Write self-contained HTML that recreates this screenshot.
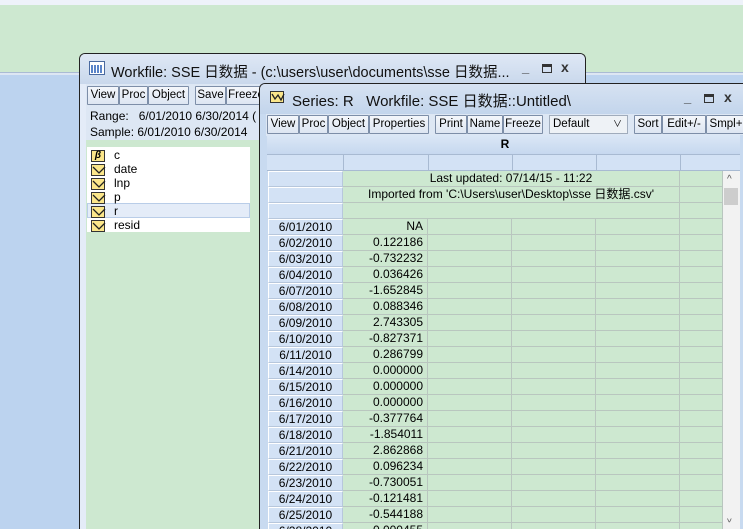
<!DOCTYPE html>
<html><head><meta charset="utf-8"><style>
*{margin:0;padding:0;box-sizing:border-box}
html,body{width:743px;height:529px;overflow:hidden}
body{position:relative;background:#bcd3ef;font-family:"Liberation Sans","Noto Sans CJK SC",sans-serif;font-size:12px;color:#000}
.a{position:absolute}
.btn{position:absolute;height:19px;border:1px solid #7d8ea8;background:linear-gradient(#f4f7fb,#dde6f2);font-size:11.5px;line-height:17px;text-align:center;border-radius:1px}
.ico{position:absolute;width:14px;height:12px;border:1px solid #333;background:#fbe68a}
.ico svg{position:absolute;left:0;top:0}
.row{position:absolute;left:268px;height:16px;width:455px}
.obs{position:absolute;left:0;width:75px;height:16px;background:#d3e2f5;border:1px solid #fff;border-right-color:#b7c7dc;border-bottom-color:#b7c7dc;text-align:center;line-height:14px}
.cell{position:absolute;height:16px;border-right:1px solid #b9c6bf;border-bottom:1px solid #b9c6bf;background:#cde8d0;line-height:15px}
.v{left:75px;width:85px;text-align:right;padding-right:4px}
.c2{left:160px;width:84px}.c3{left:244px;width:84px}.c4{left:328px;width:84px}.c5{left:412px;width:43px}
</style></head><body>
<div class="a" style="left:0;top:0;width:743px;height:5px;background:#eef2fa"></div>
<div class="a" style="left:0;top:5px;width:743px;height:67px;background:#cde8d0"></div>
<div class="a" style="left:0;top:72px;width:743px;height:3px;background:#dde6f3;border-top:1px solid #aabbd4"></div>

<!-- Workfile window -->
<div class="a" style="left:79px;top:53px;width:507px;height:476px;background:#e4ecf8;border:1px solid #222;border-bottom:none;border-radius:6px 6px 0 0"></div>
<div class="a" style="left:80px;top:54px;width:505px;height:30px;background:linear-gradient(#dfe8f5,#c9d8ec);border-radius:5px 5px 0 0"></div>
<div class="a" style="left:89px;top:61px;width:16px;height:14px;border:1px solid #4a6aa0;background:#fff"><div style="position:absolute;left:1px;top:3px;width:12px;height:8px;background:repeating-linear-gradient(90deg,#5a84c8 0 2px,#fff 2px 3px)"></div></div>
<div class="a" style="left:111px;top:61px;font-size:14.5px;color:#111;white-space:nowrap">Workfile: SSE 日数据 - (c:\users\user\documents\sse 日数据...</div>
<div class="a" style="left:522px;top:60px;font-size:13px;font-weight:bold;color:#333">_</div>
<div class="a" style="left:542px;top:64px;width:10px;height:9px;border:1px solid #333;border-top-width:3px"></div>
<div class="a" style="left:561px;top:59px;font-size:14px;font-weight:bold;color:#333">x</div>
<div class="a" style="left:86px;top:84px;width:499px;height:445px;background:#cde8d0"></div>
<div class="a" style="left:86px;top:84px;width:499px;height:56px;background:#dde7f4"></div>
<div class="btn" style="left:87px;top:86px;width:32px">View</div>
<div class="btn" style="left:119px;top:86px;width:29px">Proc</div>
<div class="btn" style="left:148px;top:86px;width:41px">Object</div>
<div class="btn" style="left:195px;top:86px;width:31px">Save</div>
<div class="btn" style="left:226px;top:86px;width:40px">Freeze</div>
<div class="a" style="left:90px;top:109px">Range:&nbsp;&nbsp; 6/01/2010 6/30/2014 (</div>
<div class="a" style="left:90px;top:125px">Sample: 6/01/2010 6/30/2014</div>
<div class="a" style="left:87px;top:147px;width:163px;height:85px;background:#fff"></div>
<div class="a" style="left:87px;top:203px;width:163px;height:15px;background:#e4ecf8;border:1px solid #b9cde8"></div>
<div class="ico" style="left:91px;top:150px;font-size:10px;font-style:italic;font-weight:bold;text-align:center;line-height:10px">β</div>
<div class="a" style="left:114px;top:148px">c</div>
<div class="ico" style="left:91px;top:164px"><svg width="14" height="12"><path d="M1 2L7 8L13 2" stroke="#222" fill="none" stroke-width="1.3"/></svg></div>
<div class="a" style="left:114px;top:162px">date</div>
<div class="ico" style="left:91px;top:178px"><svg width="14" height="12"><path d="M1 2L7 8L13 2" stroke="#222" fill="none" stroke-width="1.3"/></svg></div>
<div class="a" style="left:114px;top:176px">lnp</div>
<div class="ico" style="left:91px;top:192px"><svg width="14" height="12"><path d="M1 2L7 8L13 2" stroke="#222" fill="none" stroke-width="1.3"/></svg></div>
<div class="a" style="left:114px;top:190px">p</div>
<div class="ico" style="left:91px;top:206px"><svg width="14" height="12"><path d="M1 2L7 8L13 2" stroke="#222" fill="none" stroke-width="1.3"/></svg></div>
<div class="a" style="left:114px;top:204px">r</div>
<div class="ico" style="left:91px;top:220px"><svg width="14" height="12"><path d="M1 2L7 8L13 2" stroke="#222" fill="none" stroke-width="1.3"/></svg></div>
<div class="a" style="left:114px;top:218px">resid</div>

<!-- Series window -->
<div class="a" style="left:259px;top:83px;width:484px;height:446px;background:#c8daf0;border:1px solid #222;border-right:none;border-bottom:none;border-radius:6px 0 0 0"></div>
<div class="a" style="left:260px;top:84px;width:483px;height:30px;background:linear-gradient(#d6e2f2,#c3d5ec);border-radius:5px 0 0 0"></div>
<div class="ico" style="left:270px;top:91px"><svg width="14" height="12"><path d="M1 2L4 7L7 3L10 8L13 2" stroke="#222" fill="none" stroke-width="1.3"/></svg></div>
<div class="a" style="left:292px;top:90px;font-size:15px;color:#111;white-space:nowrap">Series: R&nbsp;&nbsp; Workfile: SSE 日数据::Untitled\</div>
<div class="a" style="left:684px;top:90px;font-size:13px;font-weight:bold;color:#333">_</div>
<div class="a" style="left:704px;top:94px;width:10px;height:9px;border:1px solid #333;border-top-width:3px"></div>
<div class="a" style="left:724px;top:89px;font-size:14px;font-weight:bold;color:#333">x</div>
<div class="a" style="left:266px;top:114px;width:477px;height:22px;background:#dde7f4"></div>
<div class="btn" style="left:267px;top:115px;width:32px">View</div>
<div class="btn" style="left:299px;top:115px;width:29px">Proc</div>
<div class="btn" style="left:328px;top:115px;width:41px">Object</div>
<div class="btn" style="left:369px;top:115px;width:60px">Properties</div>
<div class="btn" style="left:435px;top:115px;width:32px">Print</div>
<div class="btn" style="left:467px;top:115px;width:36px">Name</div>
<div class="btn" style="left:503px;top:115px;width:40px">Freeze</div>
<div class="a" style="left:549px;top:115px;width:79px;height:19px;border:1px solid #a0acbc;background:#eef2f6;font-size:11.5px;line-height:17px;padding-left:3px">Default<span style="position:absolute;right:5px;top:0;font-size:9px">∨</span></div>
<div class="btn" style="left:634px;top:115px;width:28px">Sort</div>
<div class="btn" style="left:662px;top:115px;width:44px">Edit+/-</div>
<div class="btn" style="left:706px;top:115px;width:40px">Smpl+</div>
<div class="a" style="left:267px;top:135px;width:476px;height:20px;background:linear-gradient(#dbe7f6,#c6d8ef);border-bottom:1px solid #a8bad2;text-align:center;font-weight:bold;line-height:19px">R</div>
<div class="a" style="left:267px;top:155px;width:476px;height:16px;background:#d3e2f5;border-bottom:1px solid #a8bad2"></div>
<div class="a" style="left:343px;top:155px;width:1px;height:16px;background:#a8bad2"></div>
<div class="a" style="left:428px;top:155px;width:1px;height:16px;background:#a8bad2"></div>
<div class="a" style="left:512px;top:155px;width:1px;height:16px;background:#a8bad2"></div>
<div class="a" style="left:596px;top:155px;width:1px;height:16px;background:#a8bad2"></div>
<div class="a" style="left:680px;top:155px;width:1px;height:16px;background:#a8bad2"></div>

<div class="row" style="top:171px"><div class="obs"></div><div class="cell" style="left:75px;width:337px;text-align:center">Last updated: 07/14/15 - 11:22</div><div class="cell c5"></div></div>
<div class="row" style="top:187px"><div class="obs"></div><div class="cell" style="left:75px;width:337px;text-align:center">Imported from 'C:\Users\user\Desktop\sse 日数据.csv'</div><div class="cell c5"></div></div>
<div class="row" style="top:203px"><div class="obs"></div><div class="cell" style="left:75px;width:337px"></div><div class="cell c5"></div></div>
<div class="row" style="top:219px"><div class="obs">6/01/2010</div><div class="cell v">NA</div><div class="cell c2"></div><div class="cell c3"></div><div class="cell c4"></div><div class="cell c5"></div></div>
<div class="row" style="top:235px"><div class="obs">6/02/2010</div><div class="cell v">0.122186</div><div class="cell c2"></div><div class="cell c3"></div><div class="cell c4"></div><div class="cell c5"></div></div>
<div class="row" style="top:251px"><div class="obs">6/03/2010</div><div class="cell v">-0.732232</div><div class="cell c2"></div><div class="cell c3"></div><div class="cell c4"></div><div class="cell c5"></div></div>
<div class="row" style="top:267px"><div class="obs">6/04/2010</div><div class="cell v">0.036426</div><div class="cell c2"></div><div class="cell c3"></div><div class="cell c4"></div><div class="cell c5"></div></div>
<div class="row" style="top:283px"><div class="obs">6/07/2010</div><div class="cell v">-1.652845</div><div class="cell c2"></div><div class="cell c3"></div><div class="cell c4"></div><div class="cell c5"></div></div>
<div class="row" style="top:299px"><div class="obs">6/08/2010</div><div class="cell v">0.088346</div><div class="cell c2"></div><div class="cell c3"></div><div class="cell c4"></div><div class="cell c5"></div></div>
<div class="row" style="top:315px"><div class="obs">6/09/2010</div><div class="cell v">2.743305</div><div class="cell c2"></div><div class="cell c3"></div><div class="cell c4"></div><div class="cell c5"></div></div>
<div class="row" style="top:331px"><div class="obs">6/10/2010</div><div class="cell v">-0.827371</div><div class="cell c2"></div><div class="cell c3"></div><div class="cell c4"></div><div class="cell c5"></div></div>
<div class="row" style="top:347px"><div class="obs">6/11/2010</div><div class="cell v">0.286799</div><div class="cell c2"></div><div class="cell c3"></div><div class="cell c4"></div><div class="cell c5"></div></div>
<div class="row" style="top:363px"><div class="obs">6/14/2010</div><div class="cell v">0.000000</div><div class="cell c2"></div><div class="cell c3"></div><div class="cell c4"></div><div class="cell c5"></div></div>
<div class="row" style="top:379px"><div class="obs">6/15/2010</div><div class="cell v">0.000000</div><div class="cell c2"></div><div class="cell c3"></div><div class="cell c4"></div><div class="cell c5"></div></div>
<div class="row" style="top:395px"><div class="obs">6/16/2010</div><div class="cell v">0.000000</div><div class="cell c2"></div><div class="cell c3"></div><div class="cell c4"></div><div class="cell c5"></div></div>
<div class="row" style="top:411px"><div class="obs">6/17/2010</div><div class="cell v">-0.377764</div><div class="cell c2"></div><div class="cell c3"></div><div class="cell c4"></div><div class="cell c5"></div></div>
<div class="row" style="top:427px"><div class="obs">6/18/2010</div><div class="cell v">-1.854011</div><div class="cell c2"></div><div class="cell c3"></div><div class="cell c4"></div><div class="cell c5"></div></div>
<div class="row" style="top:443px"><div class="obs">6/21/2010</div><div class="cell v">2.862868</div><div class="cell c2"></div><div class="cell c3"></div><div class="cell c4"></div><div class="cell c5"></div></div>
<div class="row" style="top:459px"><div class="obs">6/22/2010</div><div class="cell v">0.096234</div><div class="cell c2"></div><div class="cell c3"></div><div class="cell c4"></div><div class="cell c5"></div></div>
<div class="row" style="top:475px"><div class="obs">6/23/2010</div><div class="cell v">-0.730051</div><div class="cell c2"></div><div class="cell c3"></div><div class="cell c4"></div><div class="cell c5"></div></div>
<div class="row" style="top:491px"><div class="obs">6/24/2010</div><div class="cell v">-0.121481</div><div class="cell c2"></div><div class="cell c3"></div><div class="cell c4"></div><div class="cell c5"></div></div>
<div class="row" style="top:507px"><div class="obs">6/25/2010</div><div class="cell v">-0.544188</div><div class="cell c2"></div><div class="cell c3"></div><div class="cell c4"></div><div class="cell c5"></div></div>
<div class="row" style="top:523px;height:6px;overflow:hidden"><div class="obs">6/28/2010</div><div class="cell v">0.000455</div><div class="cell c2"></div><div class="cell c3"></div><div class="cell c4"></div><div class="cell c5"></div></div>

<!-- scrollbar -->
<div class="a" style="left:723px;top:171px;width:17px;height:358px;background:#f2f2f2"></div>
<div class="a" style="left:727px;top:174px;font-size:10px;color:#555">^</div>
<div class="a" style="left:724px;top:188px;width:14px;height:17px;background:#cdcdcd"></div>
<div class="a" style="left:727px;top:512px;font-size:10px;color:#555;transform:scaleY(-1)">^</div>
<div class="a" style="left:740px;top:135px;width:3px;height:394px;background:#c8daf0"></div>
</body></html>
